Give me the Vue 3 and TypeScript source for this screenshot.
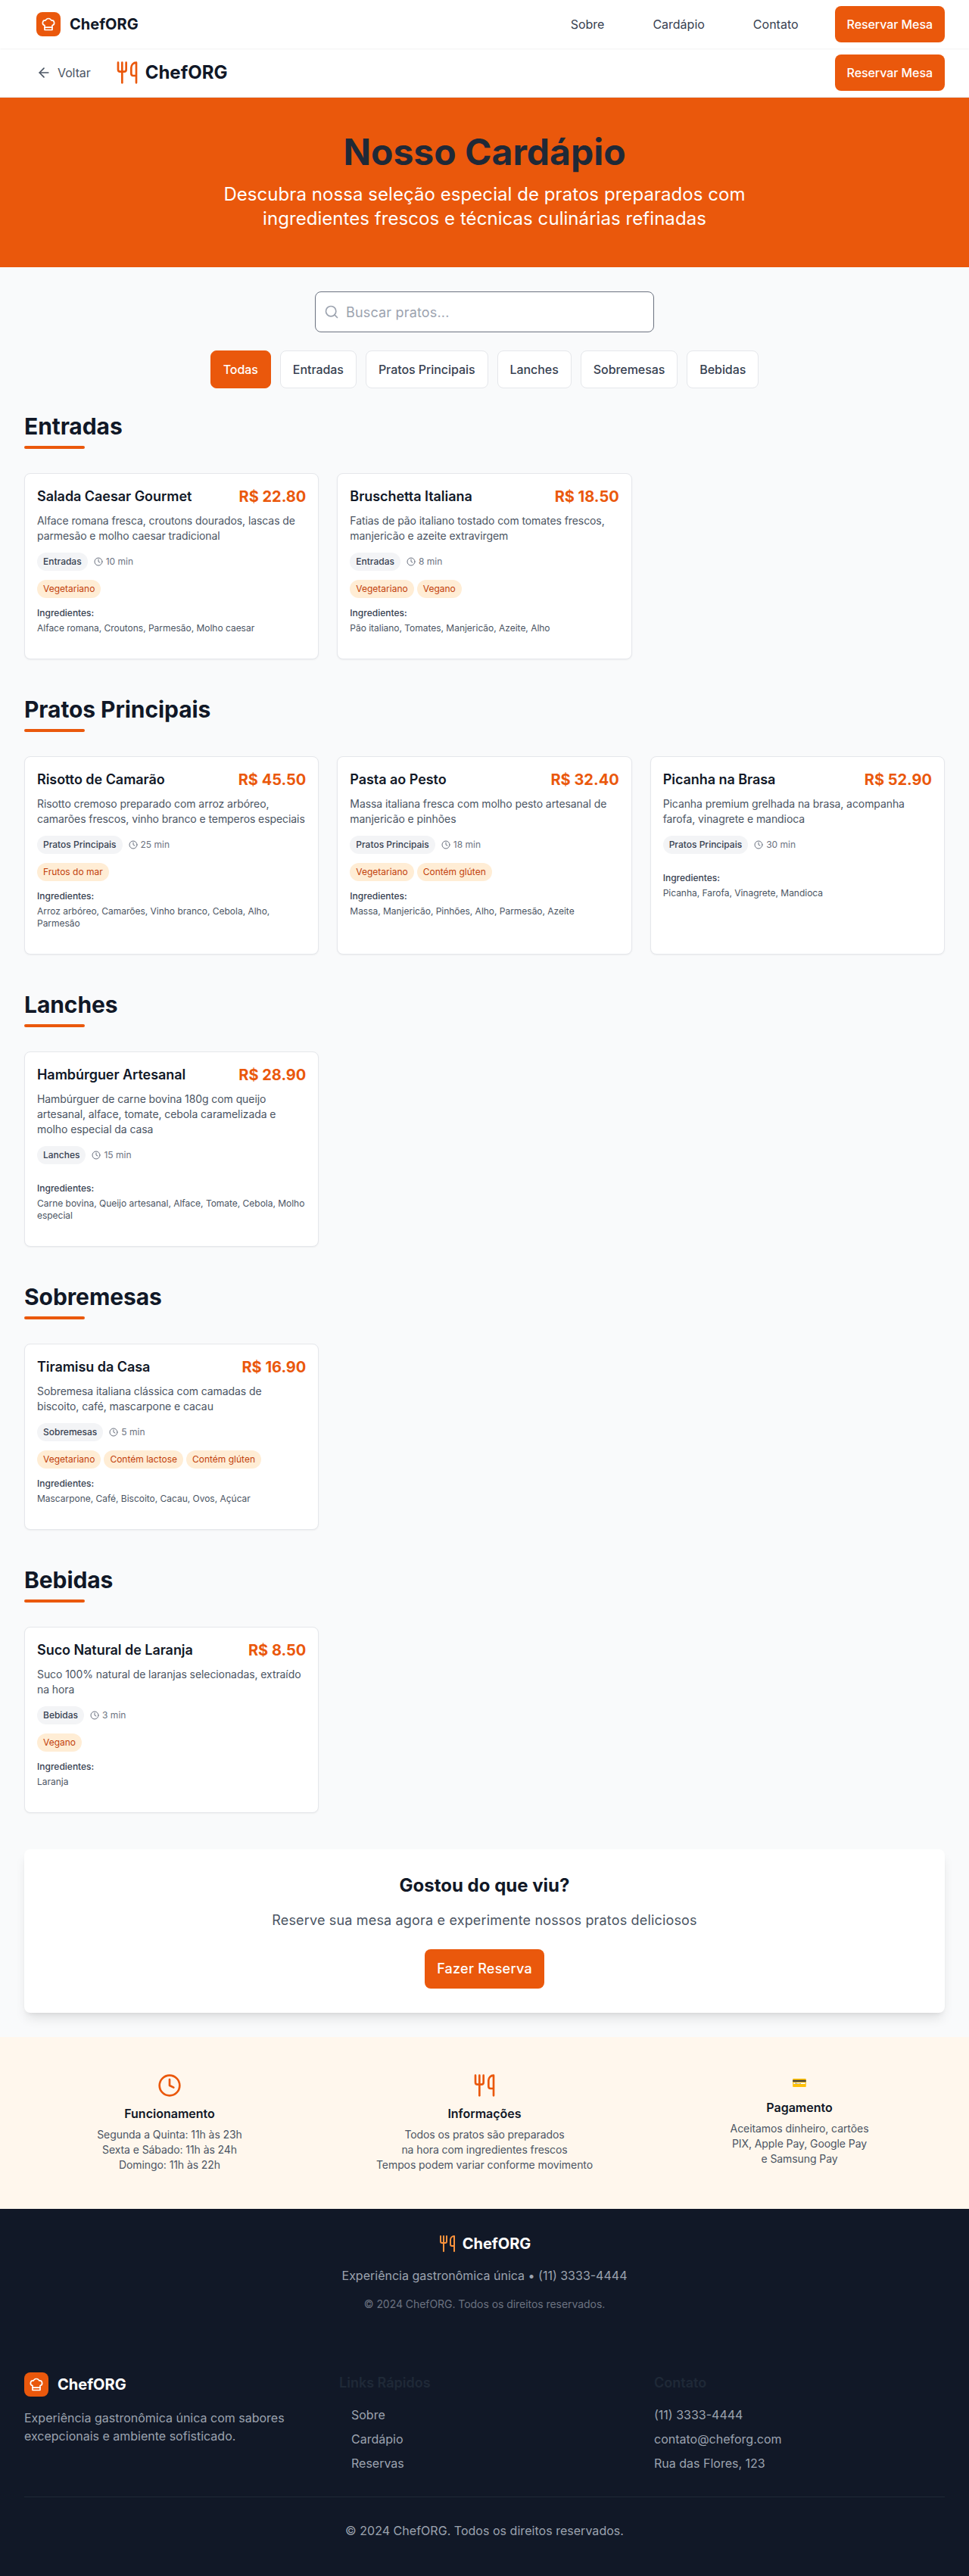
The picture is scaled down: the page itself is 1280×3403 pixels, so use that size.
<script setup lang="ts">
import { computed, ref } from 'vue'

interface Dish {
  name: string
  price: string
  description: string
  minutes: number
  tags: string[]
  ingredients: string[]
}

interface Category {
  name: string
  dishes: Dish[]
}

const categories: Category[] = [
  {
    name: 'Entradas',
    dishes: [
      {
        name: 'Salada Caesar Gourmet',
        price: '22.80',
        description: 'Alface romana fresca, croutons dourados, lascas de parmesão e molho caesar tradicional',
        minutes: 10,
        tags: ['Vegetariano'],
        ingredients: ['Alface romana', 'Croutons', 'Parmesão', 'Molho caesar'],
      },
      {
        name: 'Bruschetta Italiana',
        price: '18.50',
        description: 'Fatias de pão italiano tostado com tomates frescos, manjericão e azeite extravirgem',
        minutes: 8,
        tags: ['Vegetariano', 'Vegano'],
        ingredients: ['Pão italiano', 'Tomates', 'Manjericão', 'Azeite', 'Alho'],
      },
    ],
  },
  {
    name: 'Pratos Principais',
    dishes: [
      {
        name: 'Risotto de Camarão',
        price: '45.50',
        description: 'Risotto cremoso preparado com arroz arbóreo, camarões frescos, vinho branco e temperos especiais',
        minutes: 25,
        tags: ['Frutos do mar'],
        ingredients: ['Arroz arbóreo', 'Camarões', 'Vinho branco', 'Cebola', 'Alho', 'Parmesão'],
      },
      {
        name: 'Pasta ao Pesto',
        price: '32.40',
        description: 'Massa italiana fresca com molho pesto artesanal de manjericão e pinhões',
        minutes: 18,
        tags: ['Vegetariano', 'Contém glúten'],
        ingredients: ['Massa', 'Manjericão', 'Pinhões', 'Alho', 'Parmesão', 'Azeite'],
      },
      {
        name: 'Picanha na Brasa',
        price: '52.90',
        description: 'Picanha premium grelhada na brasa, acompanha farofa, vinagrete e mandioca',
        minutes: 30,
        tags: [],
        ingredients: ['Picanha', 'Farofa', 'Vinagrete', 'Mandioca'],
      },
    ],
  },
  {
    name: 'Lanches',
    dishes: [
      {
        name: 'Hambúrguer Artesanal',
        price: '28.90',
        description: 'Hambúrguer de carne bovina 180g com queijo artesanal, alface, tomate, cebola caramelizada e molho especial da casa',
        minutes: 15,
        tags: [],
        ingredients: ['Carne bovina', 'Queijo artesanal', 'Alface', 'Tomate', 'Cebola', 'Molho especial'],
      },
    ],
  },
  {
    name: 'Sobremesas',
    dishes: [
      {
        name: 'Tiramisu da Casa',
        price: '16.90',
        description: 'Sobremesa italiana clássica com camadas de biscoito, café, mascarpone e cacau',
        minutes: 5,
        tags: ['Vegetariano', 'Contém lactose', 'Contém glúten'],
        ingredients: ['Mascarpone', 'Café', 'Biscoito', 'Cacau', 'Ovos', 'Açúcar'],
      },
    ],
  },
  {
    name: 'Bebidas',
    dishes: [
      {
        name: 'Suco Natural de Laranja',
        price: '8.50',
        description: 'Suco 100% natural de laranjas selecionadas, extraído na hora',
        minutes: 3,
        tags: ['Vegano'],
        ingredients: ['Laranja'],
      },
    ],
  },
]

const filters = ['Todas', ...categories.map((c) => c.name)]
const selected = ref('Todas')
const search = ref('')

const visible = computed(() =>
  categories
    .filter((c) => selected.value === 'Todas' || c.name === selected.value)
    .map((c) => ({
      ...c,
      dishes: c.dishes.filter((d) => d.name.toLowerCase().includes(search.value.toLowerCase())),
    }))
    .filter((c) => c.dishes.length > 0),
)
</script>

<template>
  <div class="page">
    <header class="topbar">
      <a class="brand">
        <span class="brand-mark">
          <svg class="icon i20" viewBox="0 0 24 24">
            <path d="M6 13.87A4 4 0 0 1 7.41 6a5.11 5.11 0 0 1 1.05-1.54 5 5 0 0 1 7.08 0A5.11 5.11 0 0 1 16.59 6 4 4 0 0 1 18 13.87V21H6Z" />
            <path d="M6 17h12" />
          </svg>
        </span>
        <span class="brand-name">ChefORG</span>
      </a>
      <nav class="nav">
        <a class="nav-link">Sobre</a>
        <a class="nav-link">Cardápio</a>
        <a class="nav-link">Contato</a>
        <button class="btn">Reservar Mesa</button>
      </nav>
    </header>

    <header class="subbar">
      <div class="subbar-left">
        <a class="back">
          <svg class="icon i20" viewBox="0 0 24 24"><path d="m12 19-7-7 7-7" /><path d="M19 12H5" /></svg>
          Voltar
        </a>
        <div class="logo">
          <svg class="icon i32 accent" viewBox="0 0 24 24">
            <path d="M3 2v7c0 1.1.9 2 2 2h4a2 2 0 0 0 2-2V2" /><path d="M7 2v20" />
            <path d="M21 15V2a5 5 0 0 0-5 5v6c0 1.1.9 2 2 2h3Zm0 0v7" />
          </svg>
          <span class="logo-name">ChefORG</span>
        </div>
      </div>
      <button class="btn">Reservar Mesa</button>
    </header>

    <section class="hero">
      <h1>Nosso Cardápio</h1>
      <p>Descubra nossa seleção especial de pratos preparados com ingredientes frescos e técnicas culinárias refinadas</p>
    </section>

    <main class="content">
      <div class="search">
        <svg class="icon i20 search-icon" viewBox="0 0 24 24"><circle cx="11" cy="11" r="8" /><path d="m21 21-4.3-4.3" /></svg>
        <input v-model="search" type="text" placeholder="Buscar pratos..." />
      </div>

      <div class="filters">
        <button
          v-for="f in filters"
          :key="f"
          class="filter"
          :class="{ active: f === selected }"
          @click="selected = f"
        >{{ f }}</button>
      </div>

      <section v-for="c in visible" :key="c.name" class="category">
        <h2>{{ c.name }}</h2>
        <div class="rule"></div>
        <div class="grid">
          <article v-for="d in c.dishes" :key="d.name" class="card">
            <div class="card-head">
              <h3>{{ d.name }}</h3>
              <span class="price">R$ {{ d.price }}</span>
            </div>
            <p class="desc">{{ d.description }}</p>
            <div class="meta">
              <span class="pill">{{ c.name }}</span>
              <span class="time">
                <svg class="icon i12" viewBox="0 0 24 24"><circle cx="12" cy="12" r="10" /><path d="M12 6v6l4 2" /></svg>
                {{ d.minutes }} min
              </span>
            </div>
            <div class="tags">
              <span v-for="t in d.tags" :key="t" class="tag">{{ t }}</span>
            </div>
            <p class="ing-label">Ingredientes:</p>
            <p class="ing">{{ d.ingredients.join(', ') }}</p>
          </article>
        </div>
      </section>

      <section class="cta">
        <h3>Gostou do que viu?</h3>
        <p>Reserve sua mesa agora e experimente nossos pratos deliciosos</p>
        <button class="btn btn-lg">Fazer Reserva</button>
      </section>
    </main>

    <section class="info">
      <div class="info-col">
        <svg class="icon i32 accent" viewBox="0 0 24 24"><circle cx="12" cy="12" r="10" /><path d="M12 6v6l4 2" /></svg>
        <h4>Funcionamento</h4>
        <p>Segunda a Quinta: 11h às 23h<br />Sexta e Sábado: 11h às 24h<br />Domingo: 11h às 22h</p>
      </div>
      <div class="info-col">
        <svg class="icon i32 accent" viewBox="0 0 24 24">
          <path d="M3 2v7c0 1.1.9 2 2 2h4a2 2 0 0 0 2-2V2" /><path d="M7 2v20" />
          <path d="M21 15V2a5 5 0 0 0-5 5v6c0 1.1.9 2 2 2h3Zm0 0v7" />
        </svg>
        <h4>Informações</h4>
        <p>Todos os pratos são preparados<br />na hora com ingredientes frescos<br />Tempos podem variar conforme movimento</p>
      </div>
      <div class="info-col">
        <div class="emoji">💳</div>
        <h4>Pagamento</h4>
        <p>Aceitamos dinheiro, cartões<br />PIX, Apple Pay, Google Pay<br />e Samsung Pay</p>
      </div>
    </section>

    <footer class="foot-a">
      <div class="logo">
        <svg class="icon i24 soft" viewBox="0 0 24 24">
          <path d="M3 2v7c0 1.1.9 2 2 2h4a2 2 0 0 0 2-2V2" /><path d="M7 2v20" />
          <path d="M21 15V2a5 5 0 0 0-5 5v6c0 1.1.9 2 2 2h3Zm0 0v7" />
        </svg>
        <span class="brand-name light">ChefORG</span>
      </div>
      <p class="tagline">Experiência gastronômica única • (11) 3333-4444</p>
      <p class="legal">© 2024 ChefORG. Todos os direitos reservados.</p>
    </footer>

    <footer class="foot-b">
      <div class="foot-grid">
        <div>
          <div class="brand foot-brand">
            <span class="brand-mark">
              <svg class="icon i20" viewBox="0 0 24 24">
                <path d="M6 13.87A4 4 0 0 1 7.41 6a5.11 5.11 0 0 1 1.05-1.54 5 5 0 0 1 7.08 0A5.11 5.11 0 0 1 16.59 6 4 4 0 0 1 18 13.87V21H6Z" />
                <path d="M6 17h12" />
              </svg>
            </span>
            <span class="brand-name light">ChefORG</span>
          </div>
          <p class="about">Experiência gastronômica única com sabores excepcionais e ambiente sofisticado.</p>
        </div>
        <div>
          <h4>Links Rápidos</h4>
          <ul class="links">
            <li>Sobre</li>
            <li>Cardápio</li>
            <li>Reservas</li>
          </ul>
        </div>
        <div>
          <h4>Contato</h4>
          <ul>
            <li>(11) 3333-4444</li>
            <li>contato@cheforg.com</li>
            <li>Rua das Flores, 123</li>
          </ul>
        </div>
      </div>
      <p class="bottom">© 2024 ChefORG. Todos os direitos reservados.</p>
    </footer>
  </div>
</template>

<style>
body {
  margin: 0;
}
</style>

<style scoped>
.page,
.page * {
  box-sizing: border-box;
}
.page {
  font-family: Inter, 'Liberation Sans', sans-serif;
  font-size: 16px;
  line-height: 24px;
  color: #1f2937;
  background: #f9fafb;
}
h1, h2, h3, h4, p, ul {
  margin: 0;
  padding: 0;
}
ul {
  list-style: none;
}
button,
input {
  font-family: inherit;
  margin: 0;
}
.icon {
  display: block;
  flex: none;
  fill: none;
  stroke: currentColor;
  stroke-width: 2;
  stroke-linecap: round;
  stroke-linejoin: round;
}
.i12 { width: 12px; height: 12px; }
.i20 { width: 20px; height: 20px; }
.i24 { width: 24px; height: 24px; }
.i32 { width: 32px; height: 32px; }
.accent { color: #ea580c; }
.soft { color: #fb923c; }

.topbar,
.subbar {
  display: flex;
  align-items: center;
  justify-content: space-between;
  padding: 0 32px 0 48px;
  background: #fff;
}
.topbar {
  position: relative;
  height: 64px;
  box-shadow: 0 1px 2px 0 rgba(0, 0, 0, 0.05);
}
.subbar {
  height: 65px;
  border-bottom: 1px solid #e5e7eb;
}
.brand {
  display: flex;
  align-items: center;
  gap: 12px;
}
.brand-mark {
  display: flex;
  align-items: center;
  justify-content: center;
  width: 32px;
  height: 32px;
  border-radius: 8px;
  background: #ea580c;
  color: #fff;
}
.brand-name {
  font-size: 20px;
  line-height: 28px;
  font-weight: 700;
  color: #111827;
}
.light {
  color: #fff;
}
.nav {
  display: flex;
  align-items: center;
  gap: 32px;
}
.nav-link {
  padding: 0 16px;
  color: #374151;
}
.btn {
  padding: 12px 16px;
  border: 0;
  border-radius: 8px;
  background: #ea580c;
  color: #fff;
  font-size: 16px;
  line-height: 24px;
  font-weight: 500;
  letter-spacing: -0.07px;
}
.subbar-left {
  display: flex;
  align-items: center;
  gap: 32px;
}
.back {
  display: flex;
  align-items: center;
  gap: 8px;
  color: #4b5563;
  letter-spacing: -0.1px;
}
.logo {
  display: flex;
  align-items: center;
  gap: 8px;
}
.logo-name {
  font-size: 24px;
  line-height: 32px;
  font-weight: 700;
  color: #111827;
}

.hero {
  padding: 48px 32px;
  background: #ea580c;
  text-align: center;
}
.hero h1 {
  margin-bottom: 16px;
  font-size: 48px;
  line-height: 48px;
  font-weight: 700;
}
.hero p {
  max-width: 768px;
  margin: 0 auto;
  color: #fff;
  font-size: 24px;
  line-height: 32px;
  letter-spacing: 0.06px;
}

.content {
  padding: 32px;
}
.search {
  position: relative;
  width: 448px;
  margin: 0 auto 24px;
}
.search-icon {
  position: absolute;
  left: 12px;
  top: 17px;
  color: #9ca3af;
}
.search input {
  display: block;
  width: 100%;
  height: 54px;
  padding: 12px 16px 12px 40px;
  border: 1px solid #6b7280;
  border-radius: 8px;
  background: #fff;
  font-size: 18px;
  line-height: 28px;
  letter-spacing: 0.17px;
  outline: none;
}
.search input::placeholder {
  color: #9ca3af;
  opacity: 1;
}
.filters {
  display: flex;
  justify-content: center;
  gap: 12px;
  margin-bottom: 32px;
}
.filter {
  padding: 12px 16px;
  border: 1px solid #e5e7eb;
  border-radius: 8px;
  background: #fff;
  color: #374151;
  font-size: 16px;
  line-height: 24px;
  font-weight: 500;
  letter-spacing: -0.06px;
}
.filter.active {
  border-color: #ea580c;
  background: #ea580c;
  color: #fff;
}

.category {
  margin-bottom: 48px;
}
.category h2 {
  font-size: 30px;
  line-height: 36px;
  font-weight: 700;
  letter-spacing: -0.08px;
  color: #111827;
}
.rule {
  width: 80px;
  height: 4px;
  margin: 8px 0 32px;
  border-radius: 4px;
  background: #ea580c;
}
.grid {
  display: grid;
  grid-template-columns: repeat(3, minmax(0, 1fr));
  gap: 24px;
}
.card {
  padding: 16px 16px 32px;
  border: 1px solid #e5e7eb;
  border-radius: 8px;
  background: #fff;
  box-shadow: 0 1px 2px 0 rgba(0, 0, 0, 0.05);
}
.card-head {
  display: flex;
  justify-content: space-between;
  margin-bottom: 8px;
}
.card-head h3 {
  font-size: 18px;
  line-height: 28px;
  font-weight: 600;
  letter-spacing: -0.05px;
  color: #111827;
}
.price {
  font-size: 20px;
  line-height: 28px;
  font-weight: 700;
  color: #ea580c;
}
.desc {
  margin-bottom: 12px;
  font-size: 14px;
  line-height: 20px;
  letter-spacing: -0.08px;
  color: #4b5563;
}
.meta,
.tags {
  display: flex;
  align-items: center;
  gap: 8px;
  margin-bottom: 12px;
  font-size: 12px;
  line-height: 16px;
}
.tags {
  gap: 4px;
}
.pill,
.tag {
  padding: 4px 8px;
  border-radius: 12px;
}
.pill {
  background: #f3f4f6;
  color: #374151;
  font-weight: 500;
}
.tag {
  background: #ffedd5;
  color: #c2410c;
}
.time {
  display: flex;
  align-items: center;
  gap: 4px;
  color: #6b7280;
}
.ing-label,
.ing {
  font-size: 12px;
  line-height: 16px;
}
.ing-label {
  margin-bottom: 4px;
  font-weight: 500;
  color: #374151;
}
.ing {
  letter-spacing: -0.02px;
  color: #4b5563;
}

.cta {
  padding: 32px;
  border-radius: 8px;
  background: #fff;
  text-align: center;
  box-shadow: 0 10px 15px -3px rgba(0, 0, 0, 0.1), 0 4px 6px -4px rgba(0, 0, 0, 0.1);
}
.cta h3 {
  margin-bottom: 16px;
  font-size: 24px;
  line-height: 32px;
  font-weight: 700;
  color: #111827;
}
.cta p {
  margin-bottom: 24px;
  font-size: 18px;
  line-height: 28px;
  letter-spacing: 0.17px;
  color: #4b5563;
}
.btn-lg {
  display: block;
  margin: 0 auto;
  font-size: 18px;
  line-height: 28px;
  letter-spacing: 0.25px;
}

.info {
  display: grid;
  grid-template-columns: repeat(3, 1fr);
  gap: 32px;
  padding: 48px 32px;
  background: #fff7ed;
  text-align: center;
}
.info-col {
  display: flex;
  flex-direction: column;
  align-items: center;
}
.emoji {
  height: 24px;
}
.info h4 {
  margin: 12px 0 8px;
  font-size: 16px;
  line-height: 1.2;
  font-weight: 600;
  color: #111827;
}
.info p {
  font-size: 14px;
  line-height: 20px;
  letter-spacing: -0.08px;
  color: #4b5563;
}

.foot-a,
.foot-b {
  background: #111827;
  color: #9ca3af;
}
.foot-a {
  display: flex;
  flex-direction: column;
  align-items: center;
  gap: 16px;
  padding: 32px;
}
.legal {
  font-size: 14px;
  line-height: 20px;
  letter-spacing: -0.05px;
  color: #6b7280;
}
.foot-b {
  padding: 48px 32px;
}
.foot-grid {
  display: grid;
  grid-template-columns: repeat(3, 1fr);
  gap: 32px;
  margin-bottom: 32px;
}
.foot-brand {
  margin-bottom: 16px;
}
.foot-grid h4 {
  margin-bottom: 16px;
  font-size: 18px;
  line-height: 28px;
  font-weight: 600;
  color: #1f2937;
}
.foot-grid ul {
  display: flex;
  flex-direction: column;
  gap: 8px;
}
.foot-grid .links {
  padding-left: 16px;
}
.bottom {
  padding-top: 32px;
  border-top: 1px solid #1f2937;
  text-align: center;
  letter-spacing: 0.03px;
}
</style>
